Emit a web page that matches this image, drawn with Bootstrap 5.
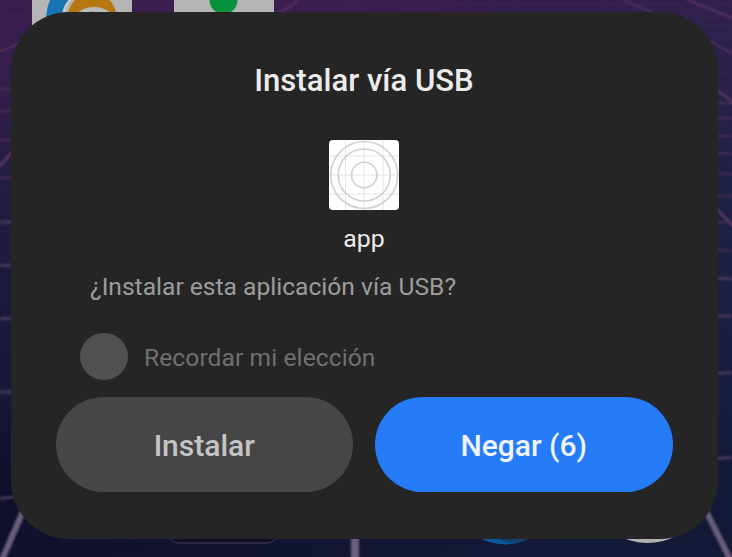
<!DOCTYPE html>
<html lang="es">
<head>
<meta charset="utf-8">
<meta name="viewport" content="width=device-width, initial-scale=1">
<title>Instalar vía USB</title>
<link href="https://cdn.jsdelivr.net/npm/bootstrap@5.3.0/dist/css/bootstrap.min.css" rel="stylesheet">
<style>
body{font-family:Roboto,sans-serif;background:#17142f}
.screen{width:732px;height:557px;padding:12px 14px 18.5px 10.5px}
.wallpaper{z-index:0}
.dialog{z-index:1;background:#252525;border-radius:58px;padding:49px 45.5px 46px 45px}
.dialog-title{font-size:31.1px;line-height:40px;font-weight:500;color:#ececec}
.app-icon{width:70px;height:70px;margin-top:39px}
.app-name{font-size:24.8px;line-height:30px;margin-top:14px;color:#ececec}
.question{font-size:24.6px;line-height:30px;margin:18px 0 0 34.5px;color:#9c9c9c}
.remember{margin:30.5px 0 0 24.5px;gap:16.5px;color:#707070;font-size:24.6px;line-height:30px;letter-spacing:.08px}
.remember-label{padding-top:4px}
.remember-dot{width:47.5px;height:47.5px;background:#505050}
.actions{gap:22px;margin-top:16.5px}
.action{height:95.5px;font-size:30px;font-weight:500;border:0;padding-top:8px}
.action-install,.action-install:hover{background:#464646;color:#c5c5c5}
.action-deny,.action-deny:hover{background:#267bf9;color:#f0f5fe}
</style>
<script src="https://cdn.jsdelivr.net/npm/bootstrap@5.3.0/dist/js/bootstrap.bundle.min.js"></script>
</head>
<body class="overflow-hidden">
<main class="screen position-relative d-flex">
<svg class="wallpaper position-absolute top-0 start-0" width="732" height="557" viewBox="0 0 732 557" aria-hidden="true">
<defs>
<linearGradient id="sky" x1="0" y1="0" x2="0" y2="1"><stop offset="0" stop-color="#3a1d4f"/><stop offset=".17" stop-color="#321e4b"/><stop offset=".36" stop-color="#211c42"/><stop offset=".7" stop-color="#17173a"/><stop offset=".85" stop-color="#10102f"/><stop offset="1" stop-color="#11112c"/></linearGradient>
<linearGradient id="blueSide" gradientUnits="userSpaceOnUse" x1="300" y1="40" x2="700" y2="240"><stop offset="0" stop-color="#172849" stop-opacity="0"/><stop offset="1" stop-color="#172849" stop-opacity=".38"/></linearGradient>
<filter id="soft" x="-5%" y="-5%" width="110%" height="110%"><feGaussianBlur stdDeviation=".8"/></filter>
</defs>
<path fill="url(#sky)" d="M0 0h732v557H0z"/>
<path fill="url(#blueSide)" d="M0 0h732v557H0z"/>
<g fill="none" stroke="#74436f" stroke-width="1.4" opacity=".75" filter="url(#soft)">
<path d="M-2 52C8 48 15 47 25 38M273 14Q290 10 300-2M622-1Q637 7 652 12M686-1Q715 12 734 18M708 40Q722 48 734 54"/>
<path d="M717 90Q726 96 734 104" stroke-width="2"/>
<path d="M-2 168L12 152M716 208L734 227" stroke-width="2.5"/>
</g>
<g fill="none" stroke="#563666" stroke-width="1.2" opacity=".3" filter="url(#soft)"><path d="M0 6h32M0 14h32M0 23h32M0 32h28M0 44h20M0 63h13M0 75h12M132 7h42M274 4h458M650 17h82M680 25h52M695 35h37M705 59h27M714 73h18M717 83h15"/></g>
<g fill="none" stroke="#553458" stroke-width="1.8" opacity=".75" filter="url(#soft)"><path d="M0 89h12M0 111h12M0 140h12M0 178h12M717 103h15M717 118h15M717 136h15M717 153l15 1M717 173l15 1M717 196h15M717 222h15M717 250l15 1"/></g>
<g fill="none" stroke="#504261" stroke-width="3" opacity=".8" filter="url(#soft)"><path d="M0 222h12M0 265.500h12M0 318.500h12M0 392h12M717 278l15 1M717 316h15M717 373.500l15-1M717 458.500l15-1M0 498.500l16-1.500"/></g>
<g fill="none" stroke="#6a5d7b" filter="url(#soft)"><path d="M24 509L-2 569" stroke-width="6"/><path d="M355 536v24" stroke-width="8"/><path d="M705 509L733 565" stroke-width="6"/></g>
<path fill="#b5b5b5" d="M32 0h100v30H32zM174 0h100v20H174z"/>
<path fill="#1676b5" d="M52-3h20Q63 5 62 18H46Q47 4 52-3z"/>
<path fill="none" stroke="#c8c8c8" stroke-width="2.500" d="M63 16Q64 5 73-3"/>
<path fill="#b97712" d="M67 15Q70 4 77-2h31Q114 4 117 15z"/>
<path fill="#bbb" d="M76 15Q82 7 94 7T112 15z"/><path fill="#66609a" d="M86 13Q92 10 97 13z"/>
<circle cx="223.500" cy="0" r="14" fill="#06923d"/>
<path d="M168 536q4 7 11 7h87q8 0 12-7" fill="#101020" stroke="#34334c" stroke-width="1.300"/>
<path fill="#055b9d" d="M477 536h55q-10 8-27 8.500-16-.5-28-8.500z"/><path fill="#123f70" d="M497 537h35q-10 6-20 6-10-1-15-6z"/>
<path fill="#b1b1b1" d="M620 536h55q-11 7-28 7-16-.5-27-7z"/>
</svg>
<section class="dialog position-relative w-100 d-flex flex-column" role="dialog" aria-labelledby="title">
<h1 id="title" class="dialog-title text-center m-0">Instalar vía USB</h1>
<svg class="app-icon align-self-center flex-shrink-0" viewBox="0 0 70 70" aria-hidden="true">
<rect width="70" height="70" rx="4" fill="#fff"/>
<g fill="none" stroke="#e5e5e8"><path d="M16.500 0v70M35.200 0v70M54 0v70M0 16h70M0 35h70M0 54h70"/></g>
<g fill="none" stroke="#d0d0d6" stroke-width="1.600"><circle cx="35.200" cy="35" r="33.500"/><circle cx="35.200" cy="35" r="26"/><circle cx="35.200" cy="35" r="12.700"/></g>
</svg>
<div class="app-name text-center">app</div>
<p class="question mb-0">¿Instalar esta aplicación vía USB?</p>
<div class="remember d-flex align-items-center"><span class="remember-dot rounded-circle flex-shrink-0"></span><span class="remember-label">Recordar mi elección</span></div>
<div class="actions d-flex">
<button type="button" class="action action-install btn rounded-pill flex-fill w-50">Instalar</button>
<button type="button" class="action action-deny btn rounded-pill flex-fill w-50">Negar (6)</button>
</div>
</section>
</main>
</body>
</html>
